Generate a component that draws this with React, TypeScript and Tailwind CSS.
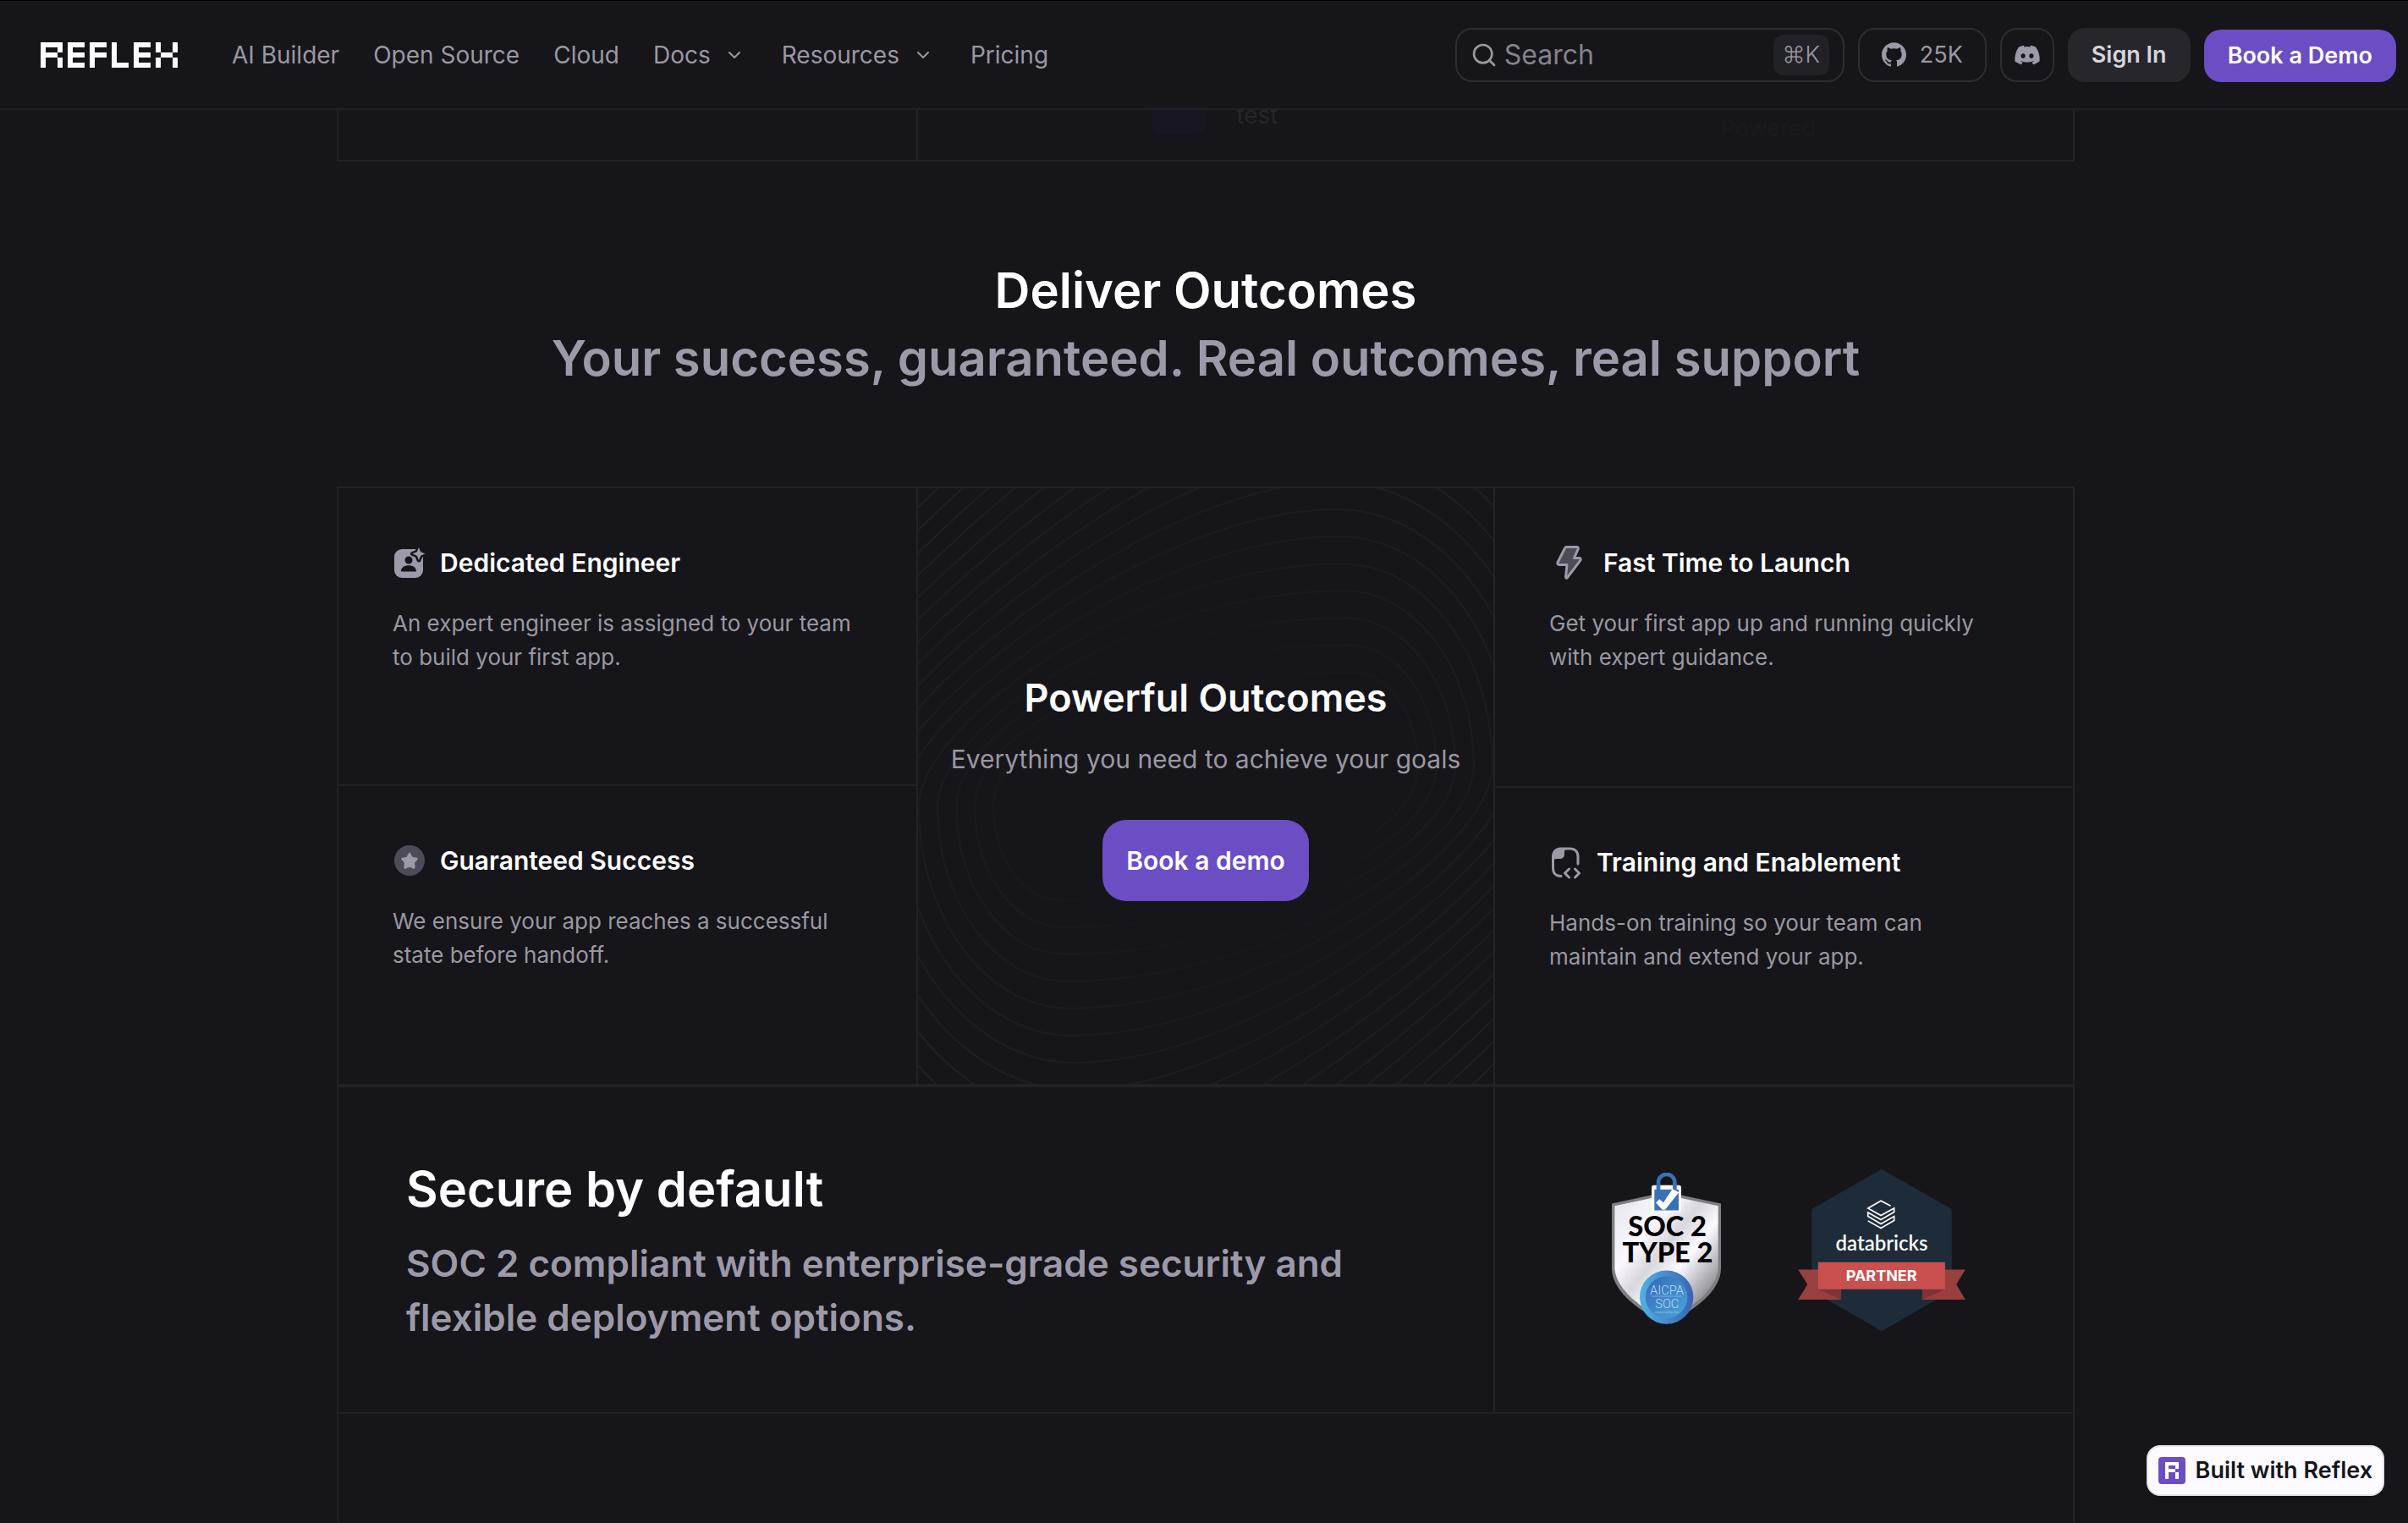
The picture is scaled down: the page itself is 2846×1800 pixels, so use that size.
import { ChevronDown, Search } from "lucide-react"
import { FaDiscord } from "react-icons/fa"
import { SiGithub } from "react-icons/si"
import type { ReactNode } from "react"

interface Feature {
  title: string
  description: string
  icon: ReactNode
}

const EngineerIcon = () => (
  <svg viewBox="0 0 40 40" className="size-10 shrink-0" aria-hidden="true">
    <rect x="2" y="4" width="34" height="34" rx="9" fill="#9c99a8" />
    <circle cx="19" cy="17" r="4.500" fill="#16151a" />
    <path fill="#16151a" d="M10 29.500c.6-4.300 4.200-6.300 9-6.300s8.400 2 9 6.300c.1.600-.3 1-.9 1H10.900c-.6 0-1-.4-.9-1Z" />
    <path
      fill="#9c99a8"
      stroke="#16151a"
      strokeWidth="5"
      strokeLinejoin="round"
      paintOrder="stroke"
      d="M31 2l2.200 5.300 5.300 2.200-5.300 2.200L31 17l-2.200-5.300-5.300-2.200 5.300-2.200Z"
    />
  </svg>
)

const SuccessIcon = () => (
  <svg viewBox="0 0 40 40" className="size-10 shrink-0" aria-hidden="true">
    <circle cx="20" cy="20" r="18" fill="#4d4b57" />
    <path
      fill="#9c99a8"
      stroke="#9c99a8"
      strokeWidth="2.500"
      strokeLinejoin="round"
      d="M20 12l2.600 4.900 5.900 1-3.700 4.600.6 6-5.400-2.100-5.400 2.100.6-6-3.700-4.600 5.900-1Z"
    />
  </svg>
)

const BoltIcon = () => (
  <svg viewBox="0 0 48 48" className="size-12 shrink-0" aria-hidden="true">
    <path
      fill="#4d4b57"
      stroke="#9c99a8"
      strokeWidth="3"
      strokeLinejoin="round"
      d="M20.500 5.500h12c1.500 0 2.200 1.200 1.600 2.500L29.500 18.500h6c1.600 0 2.200 1.500 1.300 2.800L21.500 41.500c-1 1.300-2.200.9-2-.7l1.500-14.300h-9c-1.700 0-2.600-1.200-2-2.800l8.200-16.200c.4-1.200 1.200-2 2.300-2Z"
    />
  </svg>
)

const TrainingIcon = () => (
  <svg viewBox="0 0 40 40" className="size-10 shrink-0" aria-hidden="true" fill="none">
    <path fill="#9c99a8" d="M4 16C4 8 8.500 4 17 4c1.500 0 1.800 1 1.300 2.200-.4 1-.3 2-.3 4 0 3.600-2.200 5.800-5.800 5.800-2.700 0-4.700 0-6 .8C5 17.500 4 17.200 4 16Z" />
    <path
      stroke="#9c99a8"
      strokeWidth="3"
      strokeLinecap="round"
      strokeLinejoin="round"
      d="M14 36.500c-6 0-9.500-3.500-9.500-9.500V13.500c0-6 3.500-9.500 9.500-9.500h10.500C30.500 4 34 7.500 34 13.500V22M23.500 28l-5 5 5 5M30.500 28l5 5-5 5"
    />
  </svg>
)

const leftFeatures: Feature[] = [
  {
    title: "Dedicated Engineer",
    description: "An expert engineer is assigned to your team to build your first app.",
    icon: <EngineerIcon />,
  },
  {
    title: "Guaranteed Success",
    description: "We ensure your app reaches a successful state before handoff.",
    icon: <SuccessIcon />,
  },
]

const rightFeatures: Feature[] = [
  {
    title: "Fast Time to Launch",
    description: "Get your first app up and running quickly with expert guidance.",
    icon: <BoltIcon />,
  },
  {
    title: "Training and Enablement",
    description: "Hands-on training so your team can maintain and extend your app.",
    icon: <TrainingIcon />,
  },
]

const navLinks = [
  { label: "AI Builder", menu: false },
  { label: "Open Source", menu: false },
  { label: "Cloud", menu: false },
  { label: "Docs", menu: true },
  { label: "Resources", menu: true },
  { label: "Pricing", menu: false },
]

const Logo = () => (
  <svg viewBox="0 0 162 30" className="h-[30px] w-[162px]" fill="#fcfbff" shapeRendering="crispEdges" aria-hidden="true">
    <path d="M0 0h26v12h-6V6H6v6h14v6H6v12H0ZM20 18h6v12h-6Z" />
    <path d="M32 0h20v6H38v6h14v6H38v6h14v6H32Z" />
    <path d="M58 0h20v6H64v6h14v6H64v12h-6Z" />
    <path d="M84 0h6v24h14v6H84Z" />
    <path d="M110 0h20v6h-14v6h14v6h-14v6h14v6h-20Z" />
    <path d="M136 0h6v12h-6ZM156 0h6v12h-6ZM142 12h14v6h-14ZM136 18h6v12h-6ZM156 18h6v12h-6Z" />
  </svg>
)

const Navbar = () => (
  <header className="fixed inset-x-0 top-0 z-10 flex h-[130px] items-center border-t border-b-2 border-t-black border-b-[#222126] bg-[#16151a] pr-3.5 pl-12">
    <a href="#home" aria-label="Reflex">
      <Logo />
    </a>
    <nav className="ml-16 flex items-center gap-10 text-[28px] leading-10 text-[#9a98a2]">
      {navLinks.map((link) =>
        link.menu ? (
          <button key={link.label} type="button" className="mr-1 flex items-center gap-4">
            {link.label}
            <ChevronDown className="size-6" strokeWidth={2} />
          </button>
        ) : (
          <a key={link.label} href="#nav">
            {link.label}
          </a>
        )
      )}
    </nav>
    <div className="ml-auto flex items-center gap-4 text-[27px] leading-10 font-semibold">
      <label className="flex h-16 w-[460px] items-center rounded-[20px] border-2 border-[#2d2c32] pr-4 pl-4">
        <Search className="size-8 shrink-0 text-[#9a98a2]" strokeWidth={2} />
        <input
          type="search"
          aria-label="Search"
          placeholder="Search"
          className="ml-2 min-w-0 flex-1 bg-transparent text-[32px] font-normal outline-none placeholder:text-[#85838b]"
        />
        <kbd className="flex h-12 w-[66px] items-center justify-center rounded-xl bg-[#222128] font-['Inter',sans-serif] text-[27px] font-light text-[#9a98a2]">
          ⌘K
        </kbd>
      </label>
      <a
        href="#github"
        className="flex h-16 w-[152px] items-center justify-center gap-4 rounded-[20px] border-2 border-[#2d2c32] font-normal text-[#9a98a2]"
      >
        <SiGithub className="size-[29px] text-[#9c99a8]" />
        25K
      </a>
      <a
        href="#discord"
        aria-label="Discord"
        className="flex size-16 items-center justify-center rounded-[20px] border-2 border-[#2d2c32]"
      >
        <FaDiscord className="size-8 text-[#9c99a8]" />
      </a>
      <button type="button" className="h-16 rounded-[20px] bg-[#27262c] px-7 text-[#d8d6dc]">
        Sign In
      </button>
      <button type="button" className="mt-0.5 h-[62px] rounded-[20px] bg-[#6b4dc4] px-7 text-white">
        Book a Demo
      </button>
    </div>
  </header>
)

const FeatureCard = ({ title, description, icon }: Feature) => (
  <>
    <h3 className="flex h-12 items-center gap-4 text-[30px] leading-10 font-semibold text-white">
      {icon}
      {title}
    </h3>
    <p className="mt-7 max-w-[546px] text-[26px] leading-10 text-[#9a98a2]">{description}</p>
  </>
)

// Point-symmetric contour lines, each one step further out than the last
const contour = (k: number) => {
  const tx = 170 - 3 * k
  const ty = 166 + 32 * k
  const rx = 272 + 22 * k
  const ry = 24
  const h1 = 90 + 3 * k
  const h2 = 250 - 5 * k
  const a = 0.55 * (rx - tx)
  const b = 0.55 * (ty - ry)
  return [
    `M${-rx} ${ry}`,
    `C${-rx} ${ry - h1} ${tx - h2} ${-ty} ${tx} ${-ty}`,
    `C${tx + a} ${-ty} ${rx} ${-ry - b} ${rx} ${-ry}`,
    `C${rx} ${-ry + h1} ${-tx + h2} ${ty} ${-tx} ${ty}`,
    `C${-tx - a} ${ty} ${-rx} ${ry + b} ${-rx} ${ry}Z`,
  ].join("")
}

const Contours = () => (
  <svg
    viewBox="-339 -352 678 704"
    preserveAspectRatio="xMidYMid slice"
    className="absolute inset-0 h-full w-full"
    aria-hidden="true"
  >
    <defs>
      <radialGradient id="line" gradientUnits="userSpaceOnUse" cx="0" cy="0" r="460">
        <stop offset="35%" stopColor="#17161b" />
        <stop offset="65%" stopColor="#1b1a1f" />
        <stop offset="100%" stopColor="#1f1e23" />
      </radialGradient>
    </defs>
    {Array.from({ length: 22 }, (_, i) => (
      <path key={i} d={contour(i - 1)} fill="none" stroke="url(#line)" strokeWidth="2" />
    ))}
  </svg>
)

const SocBadge = () => (
  <svg viewBox="135 77 387 545" className="h-[182px] w-[129px]" role="img" aria-label="SOC 2 Type 2">
    <defs>
      <linearGradient id="metal" x1="0" y1="0" x2="1" y2="1">
        <stop offset="0" stopColor="#e4e3ea" />
        <stop offset="0.300" stopColor="#fbf9ff" />
        <stop offset="0.450" stopColor="#d9d7de" />
        <stop offset="0.600" stopColor="#fbfaff" />
        <stop offset="0.850" stopColor="#8f8e95" />
      </linearGradient>
      <linearGradient id="seal" x1="0" y1="0" x2="1" y2="0">
        <stop offset="0" stopColor="#4fb4e2" />
        <stop offset="1" stopColor="#3c62b4" />
      </linearGradient>
      <linearGradient id="sealIn" x1="0" y1="0" x2="1" y2="1">
        <stop offset="0" stopColor="#3768b4" />
        <stop offset="1" stopColor="#4aa5de" />
      </linearGradient>
    </defs>
    <path fill="#7f7e84" d="M328 145 522 186V415C522 490 440 560 328 613 216 560 135 490 135 415V186Z" />
    <path fill="url(#metal)" d="M328 155 512 194V412C512 480 430 552 328 602 226 552 145 480 145 412V194Z" />
    <rect x="276" y="121" width="105" height="95" rx="8" fill="#fcfbff" />
    <path fill="none" stroke="#3b6fb5" strokeWidth="14" d="M300 138V111a29 29 0 0 1 58 0V138" />
    <rect x="286" y="136" width="86" height="74" fill="#3971b5" />
    <path fill="#fff" d="M291 183 304 170 318 182 350 134 373 146 324 208 314 208Z" />
    <circle cx="329" cy="518" r="95" fill="url(#seal)" />
    <circle cx="329" cy="518" r="74" fill="url(#sealIn)" />
    <path fill="#b8dcf5" d="M276 514h106v1.500H276Z" />
    <text textAnchor="middle">
      <tspan x="332" y="302" fontSize="98" className="font-['Lato',sans-serif] font-black" fill="#000">
        SOC 2
      </tspan>
      <tspan x="333" y="395" fontSize="98" className="font-['Lato',sans-serif] font-black" fill="#000">
        TYPE 2
      </tspan>
      <tspan x="330" y="507" fontSize="44" className="font-['Roboto',sans-serif] font-light" fill="#b8dcf5">
        AICPA
      </tspan>
      <tspan x="331" y="555" fontSize="44" className="font-['Roboto',sans-serif] font-light" fill="#b8dcf5">
        SOC
      </tspan>
      <tspan x="330" y="573" fontSize="11" className="font-['Roboto',sans-serif] font-light" fill="#b8dcf5">
        aicpa.org/soc4so
      </tspan>
    </text>
  </svg>
)

const DatabricksBadge = () => (
  <svg viewBox="795 61 594 580" className="h-[193px] w-[198px]" role="img" aria-label="Databricks Partner">
    <path fill="#1e2b38" d="M1092 63 1341 205V495L1092 639 843 495V205Z" />
    <path
      fill="none"
      stroke="#fff"
      strokeWidth="5"
      d="M1124 194 1089 176 1043 202 1089 228 1136 202V216L1089 243 1043 217V231L1089 258 1136 231V246L1089 273 1043 247"
    />
    <text x="1092" y="353" textAnchor="middle" fontSize="72" className="font-['Lato',sans-serif] font-semibold" fill="#fff">
      databricks
    </text>
    <path fill="#98403f" d="M795 420H948V527H795L828 473ZM1389 420H1236V527H1389L1357 473Z" />
    <path fill="#7d3337" d="M868 490H948V527ZM1317 490H1236V527Z" />
    <path fill="#c9504e" d="M866 394H1317V490H866Z" />
    <text x="1091" y="460" textAnchor="middle" fontSize="54" className="font-['Inter',sans-serif] font-bold" fill="#fff">
      PARTNER
    </text>
  </svg>
)

export default function App() {
  return (
    <div className="h-screen overflow-hidden bg-[#16151a] font-['Inter','Liberation_Sans',sans-serif]">
      <Navbar />
      <main className="mx-auto max-w-[2058px] pt-[108px] pl-1">
        <section className="grid h-[83px] grid-cols-[1fr_2fr] border-x-2 border-b-2 border-[#222126]">
          <div className="-mr-0.5 border-r-2 border-[#222126]" />
          <div className="flex items-start pr-[304px] pl-[278px]">
            <div className="h-[50px] w-16 rounded-xl bg-[#191624]" />
            <span className="mt-2 ml-9 text-[28px] leading-10 text-[#26252b]">test</span>
            <span className="mt-6 ml-auto text-[27px] leading-10 text-[#1a191e]">Powered</span>
          </div>
        </section>

        <section className="pt-[112px] text-center text-[58px] leading-20 font-semibold">
          <h2 className="text-white">Deliver Outcomes</h2>
          <p className="text-[#9c99a8]">Your success, guaranteed. Real outcomes, real support</p>
        </section>

        <section className="mt-28 grid grid-cols-[1fr_684px_1fr] border-2 border-[#222126]">
          <div className="grid grid-rows-2">
            {leftFeatures.map((feature) => (
              <article key={feature.title} className="border-[#222126] p-16 first:border-b-2">
                <FeatureCard {...feature} />
              </article>
            ))}
          </div>
          <div className="relative flex h-[704px] flex-col items-center justify-center border-x-2 border-[#222126]">
            <Contours />
            <div className="relative flex flex-col items-center">
              <h3 className="text-[45px] leading-16 font-semibold text-white">Powerful Outcomes</h3>
              <p className="mt-4 text-[30px] leading-12 text-[#9a98a2]">Everything you need to achieve your goals</p>
              <button type="button" className="mt-12 h-24 rounded-[28px] bg-[#6b4dc4] px-7 text-[30px] font-semibold text-white">
                Book a demo
              </button>
            </div>
          </div>
          <div className="grid grid-rows-2">
            {rightFeatures.map((feature) => (
              <article key={feature.title} className="border-[#222126] p-16 last:border-t-2">
                <FeatureCard {...feature} />
              </article>
            ))}
          </div>
        </section>

        <section className="grid grid-cols-[2fr_1fr] border-2 border-[#222126]">
          <div className="border-r-2 border-[#222126] p-20 font-semibold">
            <h2 className="text-[58px] leading-20 text-white">Secure by default</h2>
            <p className="mt-4 max-w-[1160px] text-[44px] leading-16 text-[#9c99a8]">
              SOC 2 compliant with enterprise-grade security and flexible deployment options.
            </p>
          </div>
          <div className="flex items-center justify-center gap-[91px] pl-3">
            <SocBadge />
            <DatabricksBadge />
          </div>
        </section>
        <section className="h-[400px] border-x-2 border-[#222126]" />
      </main>

      <a
        href="#built-with-reflex"
        className="fixed right-7 bottom-8 flex h-[60px] items-center gap-3 rounded-2xl border-2 border-[#e4e2ea] bg-[#fdfbff] px-3 text-[27px] font-semibold text-[#16151a]"
      >
        <svg viewBox="0 0 32 32" className="size-8" aria-hidden="true">
          <rect width="32" height="32" rx="4" fill="#6b4dc4" />
          <path fill="#fff" shapeRendering="crispEdges" d="M8 6h16v8h-4v-4h-8v4h8v4h-8v8H8ZM20 18h4v8h-4Z" />
        </svg>
        Built with Reflex
      </a>
    </div>
  )
}
